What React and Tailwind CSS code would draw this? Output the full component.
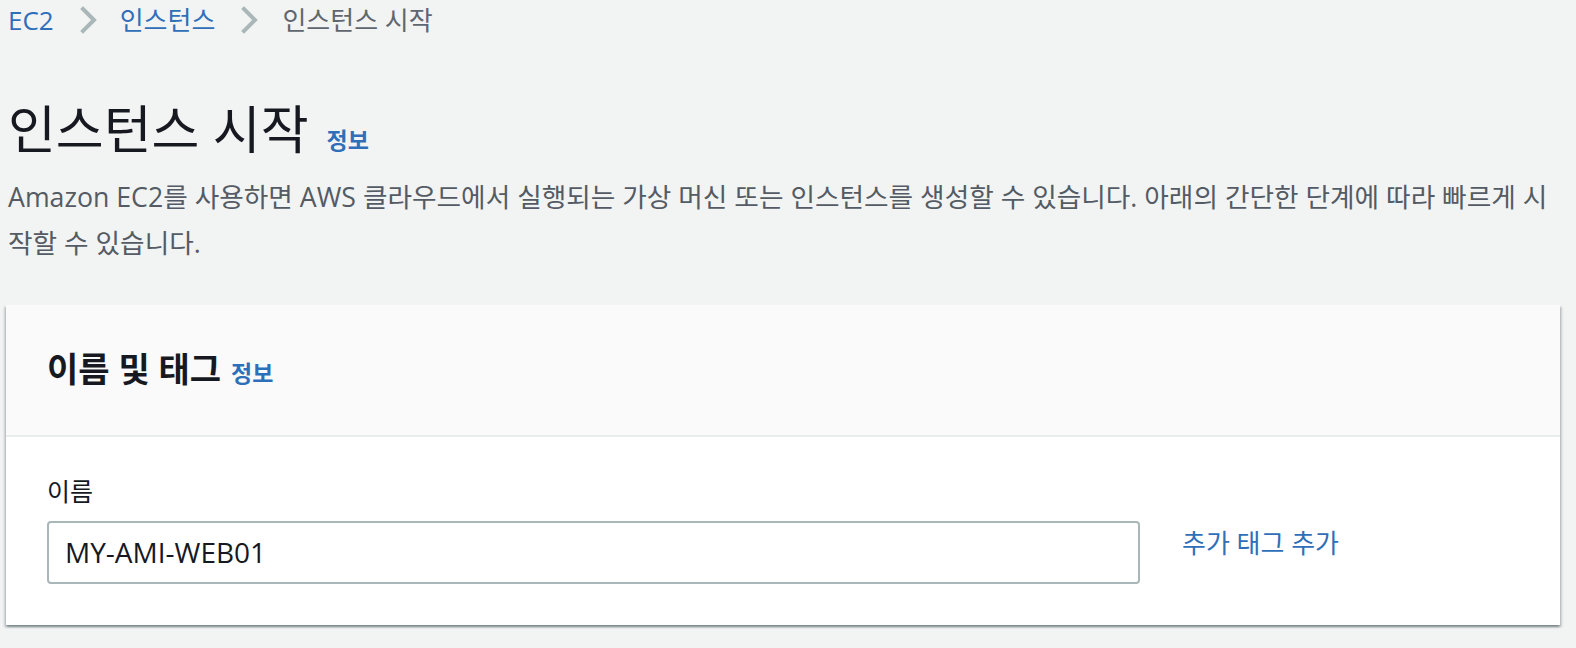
import React from "react";

const Chevron = () => (
  <svg width="20" height="30" viewBox="0 0 20 30" className="shrink-0">
    <polyline points="4,4 15,15 4,26" fill="none" stroke="#aab7b8" strokeWidth="4" strokeLinecap="square" />
  </svg>
);

export default function App() {
  return (
    <div
      className="min-h-[648px] w-full bg-[#f2f3f3] pl-[6px] pr-[16px]"
      style={{ fontFamily: "'Open Sans','Noto Sans CJK KR',sans-serif" }}
    >
      {/* Breadcrumb */}
      <nav className="flex h-[40px] items-center pl-[2px] text-[26px] leading-[40px]">
        <span className="text-[#2f6fba]">EC2</span>
        <span className="ml-[25px] mr-[21px] flex items-center"><Chevron /></span>
        <span className="text-[#2f6fba]">인스턴스</span>
        <span className="ml-[25px] mr-[22px] flex items-center"><Chevron /></span>
        <span className="text-[#5f6670]">인스턴스 시작</span>
      </nav>

      {/* Heading */}
      <div className="mt-[58px] flex items-baseline pl-[2px]">
        <h1 className="text-[52px] font-normal leading-[62px] text-[#16191f]">인스턴스 시작</h1>
        <span className="ml-[18px] text-[23px] font-bold text-[#2f6fba]">정보</span>
      </div>

      <p className="mt-[14px] pl-[2px] text-[26.7px] leading-[46px] text-[#545b64]">
        Amazon EC2를 사용하면 AWS 클라우드에서 실행되는 가상 머신 또는 인스턴스를 생성할 수 있습니다. 아래의 간단한 단계에 따라 빠르게 시<br />작할 수 있습니다.
      </p>

      {/* Card */}
      <section className="mt-[39px] w-[1554px] bg-white shadow-[0_2px_2px_0_rgba(0,28,36,0.3),2px_2px_2px_0_rgba(0,28,36,0.15),-2px_2px_2px_0_rgba(0,28,36,0.15)]">
        <header className="flex items-baseline border-b-2 border-[#eaeded] bg-[#fafafa] px-[41px] py-[44px]">
          <h2 className="text-[34px] font-bold leading-[40px] text-[#16191f]">이름 및 태그</h2>
          <span className="ml-[10px] text-[23px] font-bold text-[#2f6fba]">정보</span>
        </header>
        <div className="px-[41px] pb-[41px] pt-[38px]">
          <label className="block text-[25px] leading-[32px] text-[#16191f]">이름</label>
          <div className="mt-[14px] flex items-start">
            <div className="flex h-[63px] w-[1093px] items-center rounded-[4px] border-2 border-[#aab7b8] bg-white px-[16px]">
              <span className="text-[28px] text-[#16191f]">MY-AMI-WEB01</span>
            </div>
            <span className="ml-[42px] mt-[6px] text-[26px] leading-[32px] text-[#2f6fba]">추가 태그 추가</span>
          </div>
        </div>
      </section>
    </div>
  );
}
